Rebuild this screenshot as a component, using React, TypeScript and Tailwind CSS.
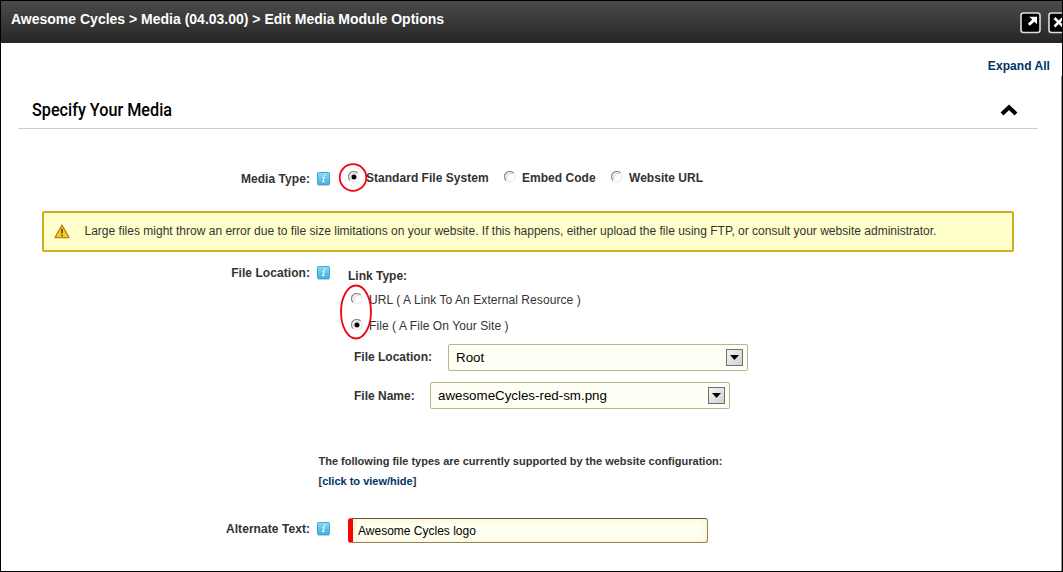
import React, { useState } from "react";

function InfoIcon() {
  return (
    <svg width="13" height="15" viewBox="0 0 13 15" className="shrink-0">
      <defs>
        <linearGradient id="info" x1="0" y1="0" x2="0" y2="1">
          <stop offset="0" stopColor="#8fd8f5" />
          <stop offset="1" stopColor="#3fb0e2" />
        </linearGradient>
      </defs>
      <rect x="0.5" y="12" width="12" height="2" rx="1" fill="#c9cdd0" />
      <rect x="0.5" y="0.5" width="12" height="12" rx="0.8" fill="url(#info)" stroke="#41a5d6" />
      <path d="M7 3.2h1.3M5.5 5.4H7L6.2 9.6M5 9.7h2.4" stroke="#eefaff" strokeWidth="1.2" fill="none" />
    </svg>
  );
}

function Radio({ on, onClick }: { on: boolean; onClick: () => void }) {
  return (
    <button type="button" role="radio" aria-checked={on} onClick={onClick} className="block h-3 w-3 shrink-0">
      <svg width="12" height="12" viewBox="0 0 12 12">
        <circle cx="6" cy="6" r="5" fill="#fff" stroke="#e6e6e6" />
        <path d="M2 9.6A5 5 0 0 1 9.6 2" fill="none" stroke="#8c8c8c" strokeWidth="1.1" />
        <path d="M3.2 8.4A3.9 3.9 0 0 1 8.4 3" fill="none" stroke="#b9b9b9" strokeWidth="0.7" />
        {on && <circle cx="6" cy="6" r="2.5" fill="#000" />}
      </svg>
    </button>
  );
}

function Select({ value }: { value: string }) {
  return (
    <div className="flex h-[27px] w-[300px] shrink-0 items-center justify-between rounded-[2px] border border-[#b9b48c] bg-[#fffff6] pr-1 pl-[7px] text-[13.333px] text-black">
      <span>{value}</span>
      <span className="flex h-[17px] w-[17px] items-center justify-center border border-[#6f6f6f] bg-linear-to-br from-[#f6f6f6] to-[#cfcfcf]">
        <svg width="9" height="5" viewBox="0 0 9 5">
          <path d="M0 0h9L4.5 5z" fill="#000" />
        </svg>
      </span>
    </div>
  );
}

function Label({ children }: { children: React.ReactNode }) {
  return (
    <div className="flex w-[329px] shrink-0 items-center justify-end gap-[7px]">
      <span className="text-[12px] leading-4 font-bold tracking-[0.06px]">{children}</span>
      <InfoIcon />
    </div>
  );
}

export default function App() {
  const [media, setMedia] = useState(0);
  const [link, setLink] = useState(1);
  const [alt, setAlt] = useState("Awesome Cycles logo");
  return (
    <div className="flex h-[572px] w-[1063px] flex-col overflow-hidden border border-black bg-white font-['Liberation_Sans',Arial,sans-serif] text-[#333]">
      <header className="flex h-[42px] shrink-0 justify-between bg-linear-to-b from-[#4b4b4b] to-[#262626]">
        <h1 className="mt-[9px] ml-[10px] text-[14px] leading-[18px] font-bold whitespace-nowrap text-white">
          Awesome Cycles &gt; Media (04.03.00) &gt; Edit Media Module Options
        </h1>
        <div className="mt-[11px] flex w-[42px] shrink-0 gap-[7px] overflow-hidden">
          <svg width="21" height="22" viewBox="0 0 21 22" className="shrink-0">
            <rect x="1" y="1" width="19" height="19.5" rx="2.5" fill="#000" stroke="#dedede" strokeWidth="1.6" />
            <path d="M9 4.7h8v7.6l-2.6-2.5-4.6 3.9-1.9-1.9 4.3-4.2z" fill="#fff" />
          </svg>
          <svg width="21" height="22" viewBox="0 0 21 22" className="shrink-0">
            <rect x="1" y="1" width="19" height="19.5" rx="2.5" fill="#000" stroke="#dedede" strokeWidth="1.6" />
            <path d="M6.5 6l8.5 8.5M15 6l-8.5 8.5" stroke="#fff" strokeWidth="2.6" />
          </svg>
        </div>
      </header>

      <div className="flex min-h-0 flex-1">
        <main className="flex w-[1060px] shrink-0 flex-col">
          <div className="flex h-[48px] shrink-0 justify-end pt-[15px] pr-[11px]">
            <a className="text-[12px] leading-4 font-bold tracking-[0.06px] text-[#003366]">Expand All</a>
          </div>

          <div className="ml-[17px] flex h-[38px] w-[1020px] shrink-0 items-center justify-between border-b border-[#ccc] pr-5 pl-[14px]">
            <h2 className="origin-left scale-x-[0.9] font-[Roboto,sans-serif] text-[18px] leading-6 font-medium whitespace-nowrap text-black">
              Specify Your Media
            </h2>
            <svg width="18" height="12" viewBox="0 0 18 12">
              <path d="M2 10l7-6.8 7 6.8" fill="none" stroke="#000" strokeWidth="4" />
            </svg>
          </div>

          <div className="mt-[40px] flex h-5 shrink-0 items-center">
            <Label>Media Type:</Label>
            <div className="flex -translate-y-px items-center text-[12px] font-bold whitespace-nowrap">
              <div className="relative mr-[6px] ml-[18px] -translate-y-px">
                <Radio on={media === 0} onClick={() => setMedia(0)} />
                <svg width="30" height="30" viewBox="0 0 30 30" className="pointer-events-none absolute -top-[8px] -left-[10px] max-w-none">
                  <ellipse cx="15" cy="14.5" rx="13.3" ry="13.3" fill="none" stroke="#ee0510" strokeWidth="1.8" />
                </svg>
              </div>
              <span className="w-[138px] tracking-[0.03px]">Standard File System</span>
              <div className="-translate-y-px">
                <Radio on={media === 1} onClick={() => setMedia(1)} />
              </div>
              <span className="ml-[6px] w-[89px] tracking-[0.03px]">Embed Code</span>
              <div className="-translate-y-px">
                <Radio on={media === 2} onClick={() => setMedia(2)} />
              </div>
              <span className="ml-[6px] tracking-[0.03px]">Website URL</span>
            </div>
          </div>

          <div className="mt-[22px] ml-[41px] flex h-[41px] w-[972px] shrink-0 items-center rounded-[2px] border-2 border-[#cbb11d] bg-[#ffffcc] pb-[2px] pl-[10px]">
            <svg width="16" height="15" viewBox="0 0 16 15" className="shrink-0 translate-y-px">
              <path d="M8 1l7 12.6H1z" fill="#f9cb21" stroke="#b98316" strokeWidth="1.3" strokeLinejoin="round" />
              <path d="M8 4.7v4.8M8 10.7v1.6" stroke="#594413" strokeWidth="1.6" />
            </svg>
            <span className="ml-[14.5px] text-[12px] tracking-[0.006px] whitespace-nowrap">
              Large files might throw an error due to file size limitations on your website. If this happens, either upload the file using FTP, or consult your website administrator.
            </span>
          </div>

          <div className="mt-[13px] flex h-[189px] shrink-0 items-start">
            <Label>File Location:</Label>
            <div className="flex flex-col pt-[3px] pl-[18px]">
              <div className="text-[12px] leading-4 font-bold">Link Type:</div>
              <div className="relative flex flex-col text-[12px] whitespace-nowrap">
                <div className="flex h-[32px] items-center gap-[6px] pl-[3px]">
                  <div className="-translate-y-px">
                    <Radio on={link === 0} onClick={() => setLink(0)} />
                  </div>
                  <span className="tracking-[0.08px]">URL ( A Link To An External Resource )</span>
                </div>
                <div className="-mt-[3px] flex h-[26px] items-center gap-[6px] pl-[3px]">
                  <div className="-translate-y-px">
                    <Radio on={link === 1} onClick={() => setLink(1)} />
                  </div>
                  <span className="tracking-[0.08px]">File ( A File On Your Site )</span>
                </div>
                <svg width="34" height="58" viewBox="0 0 34 58" className="pointer-events-none absolute -top-[1px] -left-[9px] max-w-none">
                  <ellipse cx="17" cy="29" rx="15" ry="26.5" fill="none" stroke="#ee0510" strokeWidth="1.8" />
                </svg>
              </div>
              <div className="mt-[5px] flex items-center pl-[6px]">
                <span className="w-[94px] -translate-y-px text-[12px] font-bold">File Location:</span>
                <Select value="Root" />
              </div>
              <div className="mt-[11px] flex items-center pl-[6px]">
                <span className="w-[76px] text-[12px] font-bold">File Name:</span>
                <Select value="awesomeCycles-red-sm.png" />
              </div>
            </div>
          </div>

          <div className="-mt-[3px] ml-[317.5px] h-[63px] shrink-0 text-[11px] leading-5 font-bold whitespace-nowrap">
            <div>The following file types are currently supported by the website configuration:</div>
            <div>
              [<a className="text-[#003366]">click to view/hide</a>]
            </div>
          </div>

          <div className="flex h-[32px] shrink-0 items-start pt-[4px]">
            <div className="pt-[3px]">
              <Label>Alternate Text:</Label>
            </div>
            <input
              value={alt}
              onChange={(e) => setAlt(e.target.value)}
              className="ml-[18px] h-[25px] w-[360px] rounded-[3px] border border-l-[5px] border-[#8b8468] border-t-[#625c42] border-l-[#ff0000] bg-[#fffff2] pl-[5px] text-[12px] text-black shadow-[inset_0_0_8px_#fff0bd] outline-none"
            />
          </div>
        </main>
        <div className="mt-[33px] w-px shrink-0 bg-[#999]" />
      </div>
    </div>
  );
}
